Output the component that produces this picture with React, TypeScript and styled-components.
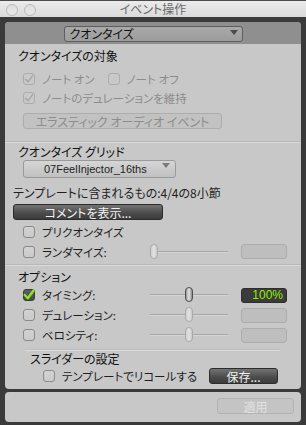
import styled, { createGlobalStyle } from 'styled-components'

const GlobalStyle = createGlobalStyle`
  html, body {
    margin: 0;
    padding: 0;
    background: #3a3a3a;
  }
  body {
    font-family: "Noto Sans CJK JP", "Noto Sans", sans-serif;
    font-size: 12px;
    font-feature-settings: "palt";
    color: #1e1e1e;
  }
`

export default function App() {
  return (
    <Window>
      <GlobalStyle />
      <TitleBar>
        <Lights>
          <Light />
          <Light />
        </Lights>
        <Title>イベント操作</Title>
      </TitleBar>
      <Frame>
        <Panel>
          <HeaderBand>
            <ModeSelect>
              <span>クオンタイズ</span>
              <Arrow $dark />
            </ModeSelect>
          </HeaderBand>

          <Section $pt={3} $pb={12}>
            <Heading $h={18}>クオンタイズの対象</Heading>
            <Row $h={19} $indent={18} $mt={4}>
              <CheckItem>
                <Box $disabled><Tick $disabled /></Box>
                <Label $disabled>ノート オン</Label>
              </CheckItem>
              <CheckItem $ml={13}>
                <Box $disabled />
                <Label $disabled>ノート オフ</Label>
              </CheckItem>
            </Row>
            <Row $h={19} $indent={18}>
              <CheckItem>
                <Box $disabled><Tick $disabled /></Box>
                <Label $disabled>ノートのデュレーションを維持</Label>
              </CheckItem>
            </Row>
            <GhostButton $w={199} $ml={18} $mt={6}>エラスティック オーディオ イベント</GhostButton>
          </Section>

          <Divider />

          <Section $pt={1} $pb={2}>
            <Heading $h={16}>クオンタイズ グリッド</Heading>
            <GridSelect>
              <span>07FeelInjector_16ths</span>
              <Arrow />
            </GridSelect>
            <InfoText>テンプレートに含まれるもの:4/4の8小節</InfoText>
            <DarkButton $w={150} $ml={8} $mt={3}>コメントを表示...</DarkButton>
            <Row $h={18} $indent={18} $mt={3}>
              <CheckItem>
                <Box />
                <Label>プリクオンタイズ</Label>
              </CheckItem>
            </Row>
            <Row $h={21} $indent={18}>
              <CheckItem $w={127}>
                <Box />
                <Label>ランダマイズ:</Label>
              </CheckItem>
              <Slider $pos={0} $disabled />
              <ValueBox />
            </Row>
          </Section>

          <Divider />

          <Section $pt={3} $pb={4}>
            <Heading $h={16}>オプション</Heading>
            <Row $h={20} $indent={18}>
              <CheckItem $w={127}>
                <Box $on><Tick /></Box>
                <Label>タイミング:</Label>
              </CheckItem>
              <Slider $pos={35} />
              <ValueBox $active>100%</ValueBox>
            </Row>
            <Row $h={20} $indent={18}>
              <CheckItem $w={127}>
                <Box />
                <Label>デュレーション:</Label>
              </CheckItem>
              <Slider $pos={35} $disabled />
              <ValueBox />
            </Row>
            <Row $h={20} $indent={18}>
              <CheckItem $w={127}>
                <Box />
                <Label>ベロシティ:</Label>
              </CheckItem>
              <Slider $pos={35} $disabled />
              <ValueBox />
            </Row>
            <SubDivider />
            <Heading $h={16} $indent={25}>スライダーの設定</Heading>
            <Row $h={18} $indent={38}>
              <CheckItem $w={166}>
                <Box />
                <Label>テンプレートでリコールする</Label>
              </CheckItem>
              <DarkButton $w={69}>保存...</DarkButton>
            </Row>
          </Section>
        </Panel>

        <FooterPanel>
          <GhostButton $w={77} $faint>適用</GhostButton>
        </FooterPanel>
      </Frame>
    </Window>
  )
}

function Tick({ $disabled }: { $disabled?: boolean }) {
  return (
    <svg width="12" height="12" viewBox="0 0 12 12">
      <path
        d={$disabled ? 'M2.5 6.2 L5 8.8 L9.6 2.6' : 'M1.8 6 L4.8 9.3 L10.4 1.8'}
        fill="none"
        stroke={$disabled ? '#a4a4a4' : '#86e81c'}
        strokeWidth={$disabled ? 1.3 : 2.4}
        strokeLinecap="round"
        strokeLinejoin="round"
      />
    </svg>
  )
}

const Window = styled.div`
  width: 306px;
  height: 425px;
  display: flex;
  flex-direction: column;
  background: #3a3a3a;
  overflow: hidden;
`

const TitleBar = styled.div`
  position: relative;
  height: 16px;
  flex: none;
  border-top: 1px solid #4a4a4a;
  background: linear-gradient(#ebebeb, #dadada);
  display: flex;
  align-items: center;
  justify-content: center;
`

const Lights = styled.div`
  position: absolute;
  left: 6px;
  top: 3px;
  display: flex;
  gap: 6px;
`

const Light = styled.span`
  width: 10px;
  height: 10px;
  border-radius: 50%;
  border: 1px solid #b9b9b9;
  background: linear-gradient(#dedede, #e9e9e9);
`

const Title = styled.span`
  font-size: 12px;
  color: #6a6a6a;
  line-height: 16px;
`

const Frame = styled.div`
  flex: 1;
  display: flex;
  flex-direction: column;
  gap: 3px;
  padding: 5px 5px 3px 5px;
`

const Panel = styled.div`
  background: #c8c8c8;
  border-radius: 4px;
  overflow: hidden;
  display: flex;
  flex-direction: column;
  height: 367px;
`

const HeaderBand = styled.div`
  height: 22px;
  flex: none;
  background: #8f8f8f;
  display: flex;
  align-items: center;
  justify-content: center;
  padding-top: 1px;
  box-sizing: border-box;
`

const Arrow = styled.span<{ $dark?: boolean }>`
  width: 0;
  height: 0;
  border-left: 4px solid transparent;
  border-right: 4px solid transparent;
  border-top: 5px solid ${p => (p.$dark ? '#4a4a4a' : '#7a7a7a')};
`

const ModeSelect = styled.div`
  width: 179px;
  height: 16px;
  box-sizing: border-box;
  border: 1px solid #5e5e5e;
  border-radius: 3px;
  background: linear-gradient(#a9a9a9, #9c9c9c);
  display: flex;
  align-items: center;
  justify-content: space-between;
  padding: 0 4px 0 5px;
  color: #111;
  font-size: 12px;

  ${Arrow} {
    margin-top: -3px;
  }
`

const Section = styled.div<{ $pt: number; $pb: number }>`
  display: flex;
  flex-direction: column;
  flex: none;
  padding: ${p => p.$pt}px 0 ${p => p.$pb}px 0;
`

const Heading = styled.div<{ $h: number; $indent?: number }>`
  height: ${p => p.$h}px;
  line-height: ${p => p.$h}px;
  padding-left: ${p => p.$indent ?? 13}px;
  font-size: 12px;
  color: #111;
`

const Row = styled.div<{ $h: number; $indent: number; $mt?: number }>`
  height: ${p => p.$h}px;
  display: flex;
  align-items: center;
  padding-left: ${p => p.$indent}px;
  margin-top: ${p => p.$mt ?? 0}px;
`

const CheckItem = styled.div<{ $w?: number; $ml?: number }>`
  display: flex;
  align-items: center;
  gap: 7px;
  flex: none;
  width: ${p => (p.$w ? `${p.$w}px` : 'auto')};
  margin-left: ${p => p.$ml ?? 0}px;
`

const Box = styled.span<{ $disabled?: boolean; $on?: boolean }>`
  width: 12px;
  height: 12px;
  box-sizing: border-box;
  border-radius: 3px;
  flex: none;
  display: flex;
  align-items: center;
  justify-content: center;
  border: 1px solid ${p => (p.$on ? '#3a3a3a' : p.$disabled ? '#ababab' : '#8a8a8a')};
  background: ${p =>
    p.$on ? 'linear-gradient(#5e5e5e, #4a4a4a)' : p.$disabled ? '#c9c9c9' : 'linear-gradient(#d2d2d2, #cacaca)'};

  svg {
    flex: none;
  }
`

const Label = styled.span<{ $disabled?: boolean }>`
  font-size: 11.5px;
  color: ${p => (p.$disabled ? '#8c8c8c' : '#1e1e1e')};
  white-space: nowrap;
`

const GhostButton = styled.div<{ $w: number; $ml?: number; $mt?: number; $faint?: boolean }>`
  width: ${p => p.$w}px;
  height: 16px;
  flex: none;
  box-sizing: border-box;
  margin-left: ${p => p.$ml ?? 0}px;
  margin-top: ${p => p.$mt ?? 0}px;
  border: 1px solid ${p => (p.$faint ? '#b3b3b3' : '#adadad')};
  border-radius: 3px;
  background: ${p => (p.$faint ? '#c4c4c4' : '#c2c2c2')};
  color: ${p => (p.$faint ? '#e2e2e2' : '#8c8c8c')};
  font-size: 12px;
  display: flex;
  align-items: center;
  justify-content: center;
  white-space: nowrap;
`

const DarkButton = styled.div<{ $w: number; $ml?: number; $mt?: number }>`
  width: ${p => p.$w}px;
  height: 16px;
  flex: none;
  box-sizing: border-box;
  margin-left: ${p => p.$ml ?? 0}px;
  margin-top: ${p => p.$mt ?? 0}px;
  border: 1px solid #2c2c2c;
  border-radius: 3px;
  background: linear-gradient(#737373, #4a4a4a 60%, #3c3c3c);
  color: #f2f2f2;
  font-size: 12px;
  display: flex;
  align-items: center;
  justify-content: center;
  white-space: nowrap;
`

const Divider = styled.div`
  height: 1px;
  flex: none;
  background: #dadada;
  border-top: 1px solid #b8b8b8;
`

const SubDivider = styled.div`
  height: 1px;
  flex: none;
  margin: 4px 21px 0 20px;
  background: #dcdcdc;
  border-top: 1px solid #bdbdbd;
`

const GridSelect = styled.div`
  width: 153px;
  height: 18px;
  flex: none;
  box-sizing: border-box;
  margin-left: 18px;
  border: 1px solid #9a9a9a;
  border-radius: 3px;
  background: linear-gradient(#d6d6d6, #c0c0c0);
  display: flex;
  align-items: center;
  justify-content: space-between;
  padding: 0 5px 0 20px;
  color: #1e1e1e;
  font-family: "Liberation Sans", Arial, sans-serif;
  font-size: 11px;

  ${Arrow} {
    margin-top: -8px;
  }
`

const InfoText = styled.div`
  height: 16px;
  line-height: 16px;
  margin-top: 7px;
  padding-left: 8px;
  font-size: 12px;
  color: #1e1e1e;
  white-space: nowrap;
`

const Slider = styled.div<{ $pos: number; $disabled?: boolean }>`
  position: relative;
  width: 78px;
  height: 16px;
  flex: none;

  &::before {
    content: '';
    position: absolute;
    left: 0;
    right: 0;
    top: 7px;
    height: 1px;
    background: #a6a6a6;
    border-bottom: 1px solid #d6d6d6;
  }

  &::after {
    content: '';
    position: absolute;
    left: ${p => p.$pos}px;
    top: 0;
    width: 8px;
    height: 15px;
    box-sizing: border-box;
    border-radius: 4px;
    border: 1px solid ${p => (p.$disabled ? '#a9a9a9' : '#4e4e4e')};
    background: ${p =>
      p.$disabled
        ? 'linear-gradient(90deg, #cfcfcf, #e2e2e2 50%, #c9c9c9)'
        : 'linear-gradient(90deg, #9a9a9a, #e4e4e4 50%, #8a8a8a)'};
  }
`

const ValueBox = styled.div<{ $active?: boolean }>`
  width: 46px;
  height: 15px;
  flex: none;
  box-sizing: border-box;
  margin-left: 13px;
  border-radius: 3px;
  border: 1px solid ${p => (p.$active ? '#2e2e2e' : '#adadad')};
  background: ${p => (p.$active ? '#3b3b3b' : '#bebebe')};
  color: #8ef000;
  font-family: "Liberation Sans", Arial, sans-serif;
  font-size: 12px;
  text-align: right;
  padding-right: 3px;
  line-height: 13px;
`

const FooterPanel = styled.div`
  height: 30px;
  flex: none;
  background: #c8c8c8;
  border-radius: 4px;
  display: flex;
  justify-content: flex-end;
  align-items: flex-start;
  padding: 6px 7px 0 0;
  box-sizing: border-box;
`
